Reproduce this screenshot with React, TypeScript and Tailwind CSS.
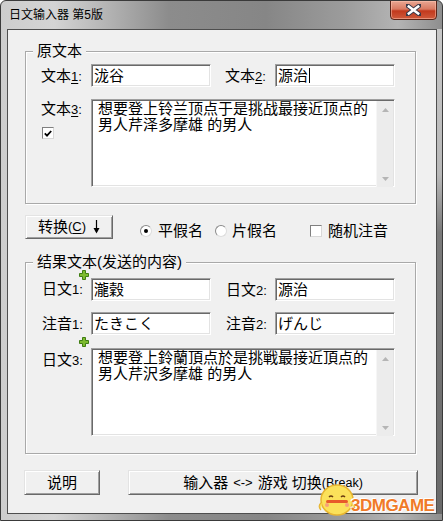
import React from "react";

const SANS = "font-['Liberation_Sans','Noto_Sans_CJK_SC',sans-serif]";

function Field({ children, caret = false }: { children: React.ReactNode; caret?: boolean }) {
  return (
    <div className="w-[120px] h-[23px] bg-white border border-t-[#a0a0a0] border-l-[#a0a0a0] border-r-white border-b-white shadow-[inset_1px_1px_0_#696969,inset_-1px_-1px_0_#e3e3e3] pl-[2px] flex items-center text-[15px] leading-[18px] text-black whitespace-nowrap">
      {children}
      {caret && <span className="inline-block w-[1px] h-[15px] bg-black ml-[1px]" />}
    </div>
  );
}

function Arrow({ up }: { up: boolean }) {
  return (
    <div className="h-[17px] flex items-center justify-center">
      <svg width="7" height="4" viewBox="0 0 7 4">
        {up ? <path d="M0 4 L3.5 0 L7 4 Z" fill="#b5b5b5" /> : <path d="M0 0 L3.5 4 L7 0 Z" fill="#b5b5b5" />}
      </svg>
    </div>
  );
}

function Area({ lines }: { lines: string[] }) {
  return (
    <div className="w-[304px] h-[88px] bg-white border border-t-[#a0a0a0] border-l-[#a0a0a0] border-r-white border-b-white shadow-[inset_1px_1px_0_#696969,inset_-1px_-1px_0_#e3e3e3] flex">
      <div className="flex-1 pl-[6px] pt-[1px] text-[15px] leading-[16px] text-black">
        {lines.map((l, i) => (
          <div key={i} className="whitespace-nowrap">{l}</div>
        ))}
      </div>
      <div className="w-[17px] h-full my-[1px] mr-[1px] bg-[#ececec] border-l border-[#f6f6f6] flex flex-col">
        <Arrow up={true} />
        <div className="flex-1" />
        <Arrow up={false} />
      </div>
    </div>
  );
}

function Label({ cjk, num, ul = false }: { cjk: string; num: string; ul?: boolean }) {
  return (
    <span className="text-[15px] leading-[18px] text-black whitespace-nowrap">
      {cjk}
      <span className={"text-[13px] " + (ul ? "underline underline-offset-2" : "")}>{num}</span>
      <span className="text-[13px]">:</span>
    </span>
  );
}

function Plus() {
  return (
    <svg width="10" height="10" viewBox="0 0 10 10">
      <path d="M3.5 0.5 H6.5 V3.5 H9.5 V6.5 H6.5 V9.5 H3.5 V6.5 H0.5 V3.5 H3.5 Z" fill="#7dbb2e" stroke="#3f7d12" strokeWidth="1" />
    </svg>
  );
}

function Btn({ children, w }: { children: React.ReactNode; w: string }) {
  return (
    <div className={w + " h-full bg-[#f0f0f0] border border-t-[#e3e3e3] border-l-[#e3e3e3] border-r-[#696969] border-b-[#696969] shadow-[inset_1px_1px_0_#ffffff,inset_-1px_-1px_0_#a0a0a0] flex items-center justify-center text-[15px] leading-[18px] text-black whitespace-nowrap"}>
      {children}
    </div>
  );
}

function Radio({ on }: { on: boolean }) {
  return (
    <div className="w-[12px] h-[12px] rounded-full bg-white border border-t-[#8a8a8a] border-l-[#8a8a8a] border-r-[#dcdcdc] border-b-[#dcdcdc] flex items-center justify-center">
      {on && <div className="w-[4px] h-[4px] rounded-full bg-black" />}
    </div>
  );
}

function Check({ on }: { on: boolean }) {
  return (
    <div className="w-[12px] h-[12px] bg-white border border-t-[#808080] border-l-[#808080] border-r-[#d8d8d8] border-b-[#d8d8d8] flex items-center justify-center">
      {on && (
        <svg width="8" height="7" viewBox="0 0 8 7">
          <path d="M0.8 3.4 L3 5.6 L7.2 1" fill="none" stroke="#000" strokeWidth="1.8" />
        </svg>
      )}
    </div>
  );
}

export default function App() {
  return (
    <div className={SANS + " relative w-[443px] h-[521px] overflow-hidden flex flex-col border border-[#3a3a3a] rounded-t-[6px] bg-[linear-gradient(90deg,#cdcdcd_0%,#d4d4d4_12%,#b4b4b4_24%,#8c8c8c_38%,#868686_60%,#9c9c9c_78%,#b4b4b4_90%,#8e8e8e_100%)]"}>
      {/* title bar */}
      <div className="h-[28px] shrink-0 flex items-start pl-[8px] pr-[5px]">
        <div className="h-[28px] flex items-center text-[12px] leading-[14px] text-black">日文输入器 第5版</div>
        <div className="ml-auto -mt-[1px] w-[47px] h-[20px] rounded-b-[4px] border border-[#5b2418] bg-[linear-gradient(180deg,#e9a793_0%,#d97a62_45%,#c2391d_55%,#cf5a3c_100%)] shadow-[inset_0_0_0_1px_rgba(255,200,180,0.5)] flex items-center justify-center">
          <svg width="15" height="12" viewBox="0 0 15 12">
            <path d="M1.5 1.5 L13.5 10.5 M13.5 1.5 L1.5 10.5" stroke="#3a3a4a" strokeWidth="4.4" strokeLinecap="square" />
            <path d="M1.8 1.8 L13.2 10.2 M13.2 1.8 L1.8 10.2" stroke="#ffffff" strokeWidth="2.6" />
          </svg>
        </div>
      </div>

      {/* frame row */}
      <div className="flex-1 flex pl-[6px] pb-[6px]">
        <div className="w-[430px] h-full border border-[#4e4e4e] bg-[#f0f0f0] flex flex-col">
          {/* group 1 */}
          <div className="mt-[21px] ml-[17px] w-[391px] h-[153px] shrink-0 border border-[#a9a9a9] shadow-[inset_1px_1px_0_#ffffff,1px_1px_0_#ffffff] flex flex-col">
            <div className="self-start -mt-[10px] ml-[7px] px-[4px] bg-[#f0f0f0] text-[15px] leading-[18px] text-black">原文本</div>
            <div className="mt-[4px] pl-[15px] h-[23px] flex items-center">
              <div className="w-[50px]"><Label cjk="文本" num="1" ul /></div>
              <Field>泷谷</Field>
              <div className="ml-[14px] w-[50px]"><Label cjk="文本" num="2" ul /></div>
              <Field caret>源治</Field>
            </div>
            <div className="mt-[12px] pl-[15px] flex items-start">
              <div className="w-[50px] flex flex-col">
                <div className="leading-[15px] pt-[1px]"><Label cjk="文本" num="3" ul /></div>
                <div className="mt-[8px] ml-[1px]"><Check on={true} /></div>
              </div>
              <Area lines={["想要登上铃兰顶点于是挑战最接近顶点的", "男人芹泽多摩雄 的男人"]} />
            </div>
          </div>

          {/* convert row */}
          <div className="mt-[11px] h-[24px] shrink-0 flex items-start">
            <div className="ml-[17px] h-[24px] flex">
              <Btn w="w-[88px]">
                <span>转换</span>
                <span className="text-[13px]">(<span className="underline underline-offset-2">C</span>)</span>
                <svg className="ml-[7px]" width="7" height="14" viewBox="0 0 7 14">
                  <path d="M3.5 0 V12" stroke="#000" strokeWidth="1.2" />
                  <path d="M0.5 8 L3.5 13.5 L6.5 8 Z" fill="#000" />
                </svg>
              </Btn>
            </div>
            <div className="ml-[27px] mt-[8px] h-[16px] flex items-center w-[75px]">
              <Radio on={true} />
              <span className="ml-[6px] text-[15px] leading-[16px]">平假名</span>
            </div>
            <div className="mt-[8px] h-[16px] flex items-center w-[95px]">
              <Radio on={false} />
              <span className="ml-[5px] text-[15px] leading-[16px]">片假名</span>
            </div>
            <div className="mt-[8px] h-[16px] flex items-center">
              <Check on={false} />
              <span className="ml-[6px] text-[15px] leading-[16px]">随机注音</span>
            </div>
          </div>

          {/* group 2 */}
          <div className="mt-[23px] ml-[17px] w-[391px] h-[192px] shrink-0 border border-[#a9a9a9] shadow-[inset_1px_1px_0_#ffffff,1px_1px_0_#ffffff] flex flex-col">
            <div className="self-start -mt-[10px] ml-[7px] px-[4px] bg-[#f0f0f0] text-[15px] leading-[18px] text-black">结果文本(发送的内容)</div>
            <div className="mt-[7px] pl-[16px] h-[23px] flex items-center">
              <div className="w-[49px] relative h-[23px] flex items-center">
                <div className="absolute left-[37px] -top-[8px]"><Plus /></div>
                <Label cjk="日文" num="1" />
              </div>
              <Field>瀧穀</Field>
              <div className="ml-[15px] w-[49px]"><Label cjk="日文" num="2" /></div>
              <Field>源治</Field>
            </div>
            <div className="mt-[11px] pl-[16px] h-[23px] flex items-center">
              <div className="w-[49px]"><Label cjk="注音" num="1" /></div>
              <Field>たきこく</Field>
              <div className="ml-[15px] w-[49px]"><Label cjk="注音" num="2" /></div>
              <Field>げんじ</Field>
            </div>
            <div className="mt-[13px] pl-[16px] flex items-start">
              <div className="w-[49px] relative">
                <div className="absolute left-[37px] -top-[11px]"><Plus /></div>
                <div className="leading-[15px] pt-[3px]"><Label cjk="日文" num="3" /></div>
              </div>
              <Area lines={["想要登上鈴蘭頂点於是挑戦最接近頂点的", "男人芹沢多摩雄 的男人"]} />
            </div>
          </div>

          {/* bottom buttons */}
          <div className="mt-[16px] h-[25px] shrink-0 flex">
            <div className="ml-[16px] flex">
              <Btn w="w-[76px]">说明</Btn>
            </div>
            <div className="ml-[28px] flex">
              <Btn w="w-[290px]">
                <span>输入器</span>
                <span className="text-[13px] mx-[5px]">&lt;-&gt;</span>
                <span>游戏 切换</span>
                <span className="text-[12.5px]">(Break)</span>
              </Btn>
            </div>
          </div>
        </div>
        <div className="flex-1 bg-[linear-gradient(180deg,#c8c8c8_0%,#b8b8b8_30%,#7a7a7a_42%,#6a6a6a_100%)]" />
      </div>

      {/* watermark */}
      <div className="absolute left-[316px] top-[477px] pointer-events-none">
        <svg width="40" height="42" viewBox="0 0 40 42">
          <ellipse cx="20" cy="22" rx="16" ry="15" fill="#fbe15a" stroke="#e8b530" strokeWidth="1.5" />
          <path d="M5 24 Q0 28 4 32" fill="#fbe15a" stroke="#e8b530" strokeWidth="1.2" />
          <path d="M35 24 Q40 28 36 32" fill="#fbe15a" stroke="#e8b530" strokeWidth="1.2" />
          <path d="M12 19 Q14 17 16 19" fill="none" stroke="#6a3a10" strokeWidth="1.5" />
          <path d="M24 19 Q26 17 28 19" fill="none" stroke="#6a3a10" strokeWidth="1.5" />
          <rect x="9" y="22" width="22" height="3" rx="1.5" fill="#e85a2a" />
          <circle cx="10" cy="27" r="2" fill="#f6a07a" />
          <circle cx="30" cy="27" r="2" fill="#f6a07a" />
        </svg>
      </div>
      <div className="absolute left-[350px] top-[495px] pointer-events-none font-['Liberation_Sans',sans-serif] font-bold text-[17px] leading-[20px] tracking-[-0.5px] text-[#f07a28] [text-shadow:0_0_1px_#fff,1px_1px_0_#fff,-1px_-1px_0_#fff]">
        3DMGAME
      </div>
    </div>
  );
}
